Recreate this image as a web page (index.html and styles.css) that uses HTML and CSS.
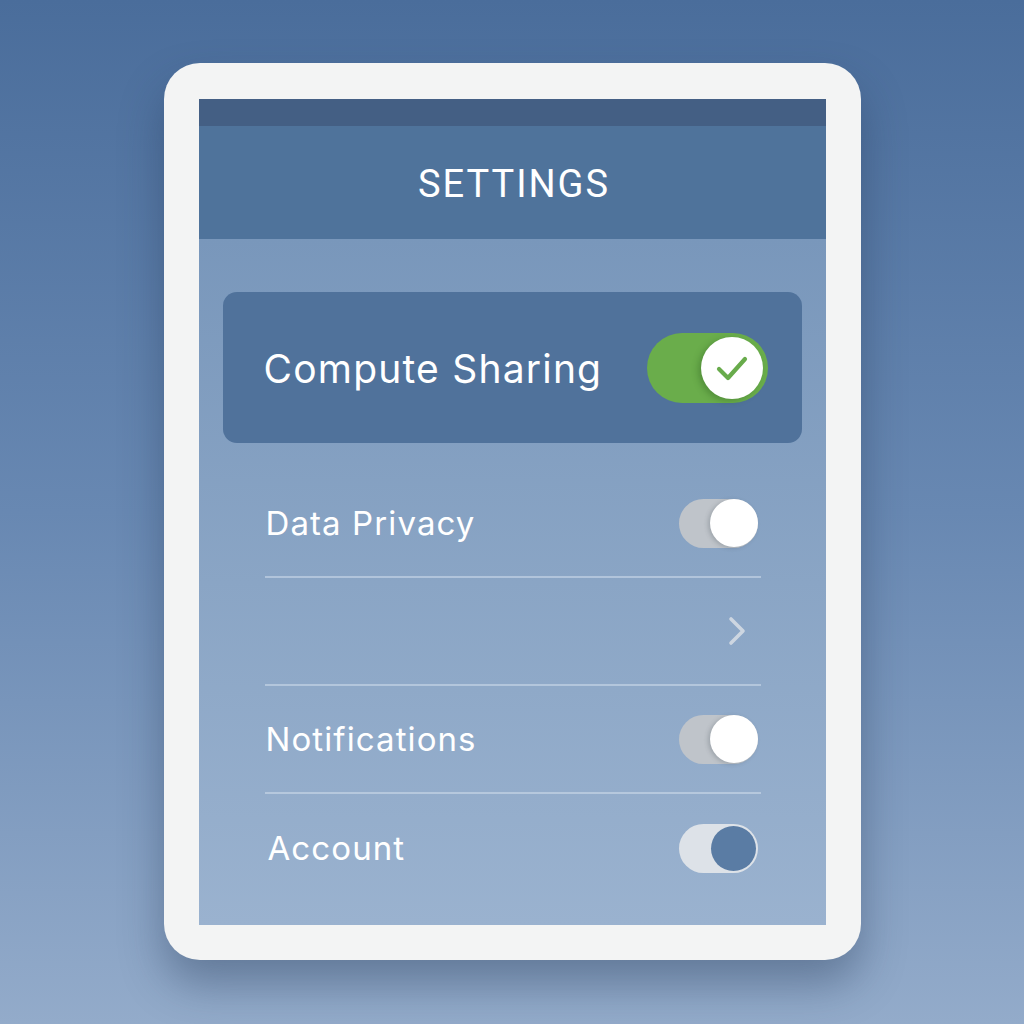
FILE: index.html
```html
<!DOCTYPE html>
<html>
<head>
<meta charset="utf-8">
<link rel="stylesheet" href="styles.css">
</head>
<body>
<div class="stage">
  <div class="device">
    <div class="screen">
      <div class="status-strip"></div>
      <div class="header"><h1 class="title">SETTINGS</h1></div>
      <div class="content">
        <div class="card">
          <span class="card-label">Compute Sharing</span>
          <div class="big-toggle">
            <div class="big-knob">
              <svg width="62" height="62" viewBox="0 0 62 62"><path d="M18 32 L27 41 L44 22" fill="none" stroke="#68ab4b" stroke-width="4.2" stroke-linecap="round" stroke-linejoin="round"/></svg>
            </div>
          </div>
        </div>
        <div class="list">
          <div class="row">
            <span class="row-label">Data Privacy</span>
            <div class="toggle"><div class="knob"></div></div>
          </div>
          <div class="row">
            <span class="row-label"></span>
            <svg class="chevron" width="22" height="32" viewBox="0 0 22 32"><path d="M5 4 L17 16 L5 28" fill="none" stroke="#cdd6e1" stroke-width="3.6" stroke-linecap="round" stroke-linejoin="round"/></svg>
          </div>
          <div class="row">
            <span class="row-label">Notifications</span>
            <div class="toggle"><div class="knob"></div></div>
          </div>
          <div class="row last">
            <span class="row-label label-account">Account</span>
            <div class="toggle toggle-light"><div class="knob knob-blue"></div></div>
          </div>
        </div>
      </div>
    </div>
  </div>
</div>
</body>
</html>
```
FILE: styles.css
```css
* { box-sizing: border-box; }
html, body { margin: 0; padding: 0; }
body {
  width: 1024px;
  height: 1024px;
  background: linear-gradient(180deg, #4a6d9b 0%, #6888b2 50%, #93abca 100%);
  font-family: Inter, "Open Sans", sans-serif;
  overflow: hidden;
}
.stage {
  display: flex;
  justify-content: center;
  padding-top: 63px;
}
.device {
  width: 697px;
  height: 897px;
  background: #f3f4f4;
  border-radius: 36px;
  padding: 36px 35px 35px 35px;
  box-shadow: 0 24px 44px rgba(35, 55, 85, 0.4);
}
.screen {
  width: 627px;
  height: 826px;
  display: flex;
  flex-direction: column;
  overflow: hidden;
}
.status-strip {
  height: 27px;
  background: #445f84;
}
.header {
  height: 113px;
  background: #4f739b;
  display: flex;
  align-items: center;
  justify-content: center;
}
.title {
  margin: 0;
  color: #ffffff;
  font-family: Roboto, Inter, sans-serif;
  font-weight: 400;
  font-size: 38px;
  letter-spacing: 2px;
  padding-top: 2px;
  padding-left: 4px;
}
.content {
  flex: 1;
  background: linear-gradient(180deg, #7997bb 0%, #8aa5c5 50%, #9ab2cf 100%);
  padding: 53px 24px 0 24px;
}
.card {
  height: 151px;
  background: #50729b;
  border-radius: 14px;
  display: flex;
  align-items: center;
  justify-content: space-between;
  padding: 0 34px 0 41px;
}
.card-label {
  color: #ffffff;
  font-size: 39px;
  font-weight: 400;
  letter-spacing: 1.2px;
  padding-top: 2px;
}
.big-toggle {
  width: 121px;
  height: 70px;
  border-radius: 35px;
  background: #6aad4b;
  display: flex;
  align-items: center;
  justify-content: flex-end;
  padding-right: 5px;
}
.big-knob {
  width: 62px;
  height: 62px;
  border-radius: 50%;
  background: #ffffff;
  display: flex;
  align-items: center;
  justify-content: center;
  box-shadow: -3px 2px 6px rgba(40, 90, 30, 0.35);
}
.list {
  margin: 27px 41px 0 42px;
}
.row {
  height: 108px;
  display: flex;
  align-items: center;
  justify-content: space-between;
  border-bottom: 2px solid rgba(210, 222, 236, 0.55);
  padding-right: 3px;
  padding-left: 1px;
}
.row.last { border-bottom: none; }
.row-label {
  color: #ffffff;
  font-size: 33px;
  font-weight: 400;
  letter-spacing: 1.1px;
}
.label-account { padding-left: 2px; }
.toggle {
  width: 79px;
  height: 49px;
  border-radius: 25px;
  background: #bfc4ca;
  display: flex;
  align-items: center;
  justify-content: flex-end;
}
.knob {
  width: 48px;
  height: 48px;
  border-radius: 50%;
  background: #ffffff;
  box-shadow: -2px 1px 4px rgba(60, 70, 80, 0.25);
}
.toggle-light {
  background: #dde2e8;
  padding-right: 2px;
}
.knob-blue {
  width: 45px;
  height: 45px;
  background: #5a7ca4;
  box-shadow: none;
}
.chevron {
  margin-right: 10px;
}
```
